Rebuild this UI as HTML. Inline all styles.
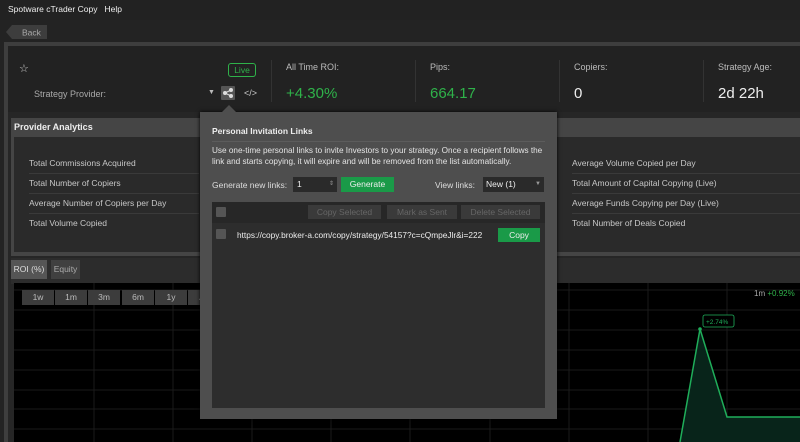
<!DOCTYPE html>
<html><head><meta charset="utf-8"><style>
*{margin:0;padding:0;box-sizing:border-box}
html,body{width:800px;height:442px;overflow:hidden}
body{background:#232323;font-family:"Liberation Sans",Arial,sans-serif;font-size:9px;color:#ddd;position:relative}
.a{position:absolute}
.lbl{color:#bbb;font-size:9px}
.big{font-size:15px}
.g{color:#2fb24a}
.row{position:absolute;left:16px;width:170px;height:20px;border-bottom:1px solid #3a3a3a;color:#c8c8c8;font-size:8.5px;padding-top:4px}
.btn{position:absolute;background:#3a3a3a;color:#666;font-size:8.5px;text-align:center;line-height:14px;height:14px}
.rb{position:absolute;top:290px;height:15px;width:32px;background:#3c3c3c;color:#bbb;font-size:8.5px;text-align:center;line-height:15px}
</style></head><body>
<div class="a" style="left:0;top:0;width:800px;height:20px;background:#222"></div>
<div class="a" style="left:8px;top:4px;font-size:8.5px;color:#eee">Spotware cTrader Copy&nbsp;&nbsp;&nbsp;Help</div>
<svg class="a" style="left:6px;top:25px" width="42" height="14"><polygon points="0,7 6,0 41,0 41,14 6,14" fill="#3d3d3d"/><text x="16" y="10.5" font-size="8.5" fill="#aaa" font-family="Liberation Sans">Back</text></svg>
<div class="a" style="left:4px;top:42px;width:800px;height:410px;background:#3e3e3e"></div>
<div class="a" style="left:8px;top:46px;width:792px;height:400px;background:#262626"></div>
<div class="a" style="left:8px;top:46px;width:792px;height:66px;background:#222"></div>
<div class="a" style="left:19px;top:62px;font-size:11px;color:#ccc">☆</div>
<div class="a" style="left:228px;top:63px;width:28px;height:14px;border:1px solid #2fb24a;border-radius:3px;color:#2fb24a;font-size:8.5px;text-align:center;line-height:12px">Live</div>
<div class="a lbl" style="left:34px;top:89px;color:#aaa">Strategy Provider:</div>
<div class="a" style="left:208px;top:89px;font-size:7px;color:#bbb">▼</div>
<div class="a" style="left:221px;top:86px;width:14px;height:14px;background:#555;border-radius:1px"></div>
<svg class="a" style="left:221px;top:86px" width="14" height="14"><g stroke="#ddd" stroke-width="1" fill="#ddd"><line x1="4" y1="7" x2="10" y2="4"/><line x1="4" y1="7" x2="10" y2="10"/><circle cx="4" cy="7" r="1.5"/><circle cx="10" cy="4" r="1.5"/><circle cx="10" cy="10" r="1.5"/></g></svg>
<div class="a" style="left:244px;top:88px;font-size:9px;color:#ccc">&lt;/&gt;</div>
<div class="a" style="left:271px;top:60px;width:1px;height:42px;background:#333"></div>
<div class="a lbl" style="left:286px;top:62px">All Time ROI:</div>
<div class="a big g" style="left:286px;top:85px">+4.30%</div>
<div class="a" style="left:415px;top:60px;width:1px;height:42px;background:#333"></div>
<div class="a lbl" style="left:430px;top:62px">Pips:</div>
<div class="a big g" style="left:430px;top:85px">664.17</div>
<div class="a" style="left:559px;top:60px;width:1px;height:42px;background:#333"></div>
<div class="a lbl" style="left:574px;top:62px">Copiers:</div>
<div class="a big" style="left:574px;top:85px;color:#eee">0</div>
<div class="a" style="left:703px;top:60px;width:1px;height:42px;background:#333"></div>
<div class="a lbl" style="left:718px;top:62px">Strategy Age:</div>
<div class="a big" style="left:718px;top:85px;color:#eee">2d 22h</div>
<div class="a" style="left:11px;top:118px;width:789px;height:138px;background:#454545"></div>
<div class="a" style="left:14px;top:122px;font-weight:bold;font-size:9px;color:#eee">Provider Analytics</div>
<div class="a" style="left:14px;top:137px;width:786px;height:115px;background:#2a2a2a"></div>
<div class="row" style="left:29px;top:154px">Total Commissions Acquired</div>
<div class="row" style="left:29px;top:174px">Total Number of Copiers</div>
<div class="row" style="left:29px;top:194px">Average Number of Copiers per Day</div>
<div class="row" style="left:29px;top:214px;border:none">Total Volume Copied</div>
<div class="row" style="left:572px;top:154px;width:228px">Average Volume Copied per Day</div>
<div class="row" style="left:572px;top:174px;width:228px">Total Amount of Capital Copying (Live)</div>
<div class="row" style="left:572px;top:194px;width:228px">Average Funds Copying per Day (Live)</div>
<div class="row" style="left:572px;top:214px;width:228px;border:none">Total Number of Deals Copied</div>
<div class="a" style="left:11px;top:258px;width:789px;height:26px;background:#2c2c2c"></div>
<div class="a" style="left:11px;top:260px;width:36px;height:19px;background:#555;color:#ddd;font-size:8.5px;line-height:19px;text-align:center">ROI (%)</div>
<div class="a" style="left:51px;top:260px;width:29px;height:19px;background:#404040;color:#aaa;font-size:8.5px;line-height:19px;text-align:center">Equity</div>
<svg class="a" style="left:14px;top:283px" width="786" height="159">
<rect width="786" height="159" fill="#000"/>
<g stroke="#1a1a1a" stroke-width="1">
<line x1="80" y1="0" x2="80" y2="159"/><line x1="159" y1="0" x2="159" y2="159"/><line x1="238" y1="0" x2="238" y2="159"/><line x1="317" y1="0" x2="317" y2="159"/><line x1="396" y1="0" x2="396" y2="159"/><line x1="476" y1="0" x2="476" y2="159"/><line x1="555" y1="0" x2="555" y2="159"/><line x1="634" y1="0" x2="634" y2="159"/><line x1="713" y1="0" x2="713" y2="159"/>
<line x1="0" y1="7" x2="786" y2="7"/><line x1="0" y1="27" x2="786" y2="27"/><line x1="0" y1="47" x2="786" y2="47"/><line x1="0" y1="67" x2="786" y2="67"/><line x1="0" y1="87" x2="786" y2="87"/><line x1="0" y1="107" x2="786" y2="107"/><line x1="0" y1="126" x2="786" y2="126"/><line x1="0" y1="146" x2="786" y2="146"/>
</g>
<polygon points="666,159 686,46 713,134 786,134 786,159" fill="#08241a"/>
<polyline points="666,159 686,46 713,134 786,134" fill="none" stroke="#1fae5a" stroke-width="1.5"/>
<circle cx="686" cy="46" r="1.8" fill="#1fae5a"/>
<rect x="689" y="32" width="31" height="12" rx="2" fill="#000" stroke="#1fae5a" stroke-width="0.8"/>
<text x="692" y="41" font-size="6.5" fill="#1fae5a" font-family="Liberation Sans">+2.74%</text>
<text x="740" y="13" font-size="8" fill="#aaa" font-family="Liberation Sans">1m <tspan fill="#2fb24a">+0.92%</tspan></text>
</svg>
<div class="rb" style="left:22px">1w</div><div class="rb" style="left:55px">1m</div><div class="rb" style="left:88px">3m</div><div class="rb" style="left:122px">6m</div><div class="rb" style="left:155px">1y</div><div class="rb" style="left:188px">All</div>
<div class="a" style="left:200px;top:112px;width:357px;height:307px;background:#4e4e4e;box-shadow:0 0 4px #000"></div>
<div class="a" style="left:222px;top:105px;width:0;height:0;border-left:7px solid transparent;border-right:7px solid transparent;border-bottom:7px solid #4e4e4e"></div>
<div class="a" style="left:212px;top:126px;font-weight:bold;font-size:8.5px;color:#eee">Personal Invitation Links</div>
<div class="a" style="left:212px;top:141px;width:333px;height:1px;background:#5c5c5c"></div>
<div class="a" style="left:212px;top:145px;width:335px;font-size:8.2px;line-height:11px;color:#e4e4e4">Use one-time personal links to invite Investors to your strategy. Once a recipient follows the link and starts copying, it will expire and will be removed from the list automatically.</div>
<div class="a" style="left:212px;top:180px;font-size:8.5px;color:#ddd">Generate new links:</div>
<div class="a" style="left:293px;top:177px;width:44px;height:15px;background:#2a2a2a;color:#eee;font-size:8.5px;line-height:15px;padding-left:4px">1<span style="position:absolute;right:3px;top:0;font-size:6px;color:#999">⇕</span></div>
<div class="a" style="left:341px;top:177px;width:53px;height:15px;background:#1a9a48;color:#eee;font-size:8.5px;line-height:15px;text-align:center">Generate</div>
<div class="a" style="left:435px;top:180px;font-size:8.5px;color:#ddd">View links:</div>
<div class="a" style="left:483px;top:177px;width:61px;height:15px;background:#2a2a2a;color:#eee;font-size:8.5px;line-height:15px;padding-left:3px">New (1)<span style="position:absolute;right:3px;top:0;font-size:6px;color:#999">▼</span></div>
<div class="a" style="left:212px;top:202px;width:333px;height:206px;background:#2d2d2d"></div>
<div class="a" style="left:212px;top:202px;width:333px;height:21px;background:#272727"></div>
<div class="a" style="left:216px;top:207px;width:10px;height:10px;background:#555;border-radius:1px"></div>
<div class="btn" style="left:308px;top:205px;width:73px">Copy Selected</div>
<div class="btn" style="left:387px;top:205px;width:70px">Mark as Sent</div>
<div class="btn" style="left:461px;top:205px;width:79px">Delete Selected</div>
<div class="a" style="left:216px;top:229px;width:10px;height:10px;background:#555;border-radius:1px"></div>
<div class="a" style="left:237px;top:230px;font-size:8.3px;color:#eee">https://copy.broker-a.com/copy/strategy/54157?c=cQmpeJlr&amp;i=222</div>
<div class="a" style="left:498px;top:228px;width:42px;height:14px;background:#1a9a48;color:#eee;font-size:8.5px;line-height:14px;text-align:center">Copy</div>
</body></html>
